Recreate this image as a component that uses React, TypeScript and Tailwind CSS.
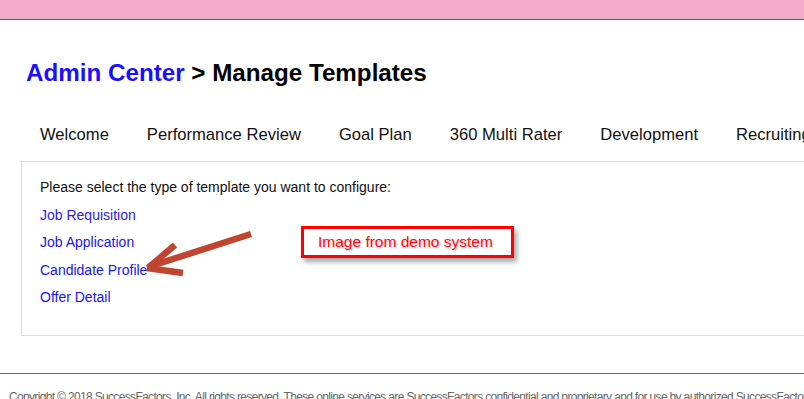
const tabs = ['Welcome', 'Performance Review', 'Goal Plan', '360 Multi Rater', 'Development', 'Recruiting'];

const templates = ['Job Requisition', 'Job Application', 'Candidate Profile', 'Offer Detail'];

function Arrow() {
  return (
    <svg className="absolute left-[140px] top-[225px]" width="120" height="60" viewBox="0 0 120 60">
      <g stroke="#c0452f" strokeWidth="6.5" strokeLinecap="butt" fill="none">
        <line x1="111" y1="9" x2="8" y2="42" />
        <line x1="35" y1="20" x2="8" y2="43" />
        <line x1="43" y1="48" x2="7" y2="43" />
      </g>
    </svg>
  );
}

export default function App() {
  return (
    <div className="relative h-[399px] w-[804px] overflow-hidden bg-white font-['Liberation_Sans',Arial,sans-serif]">
      <div className="h-[20px] border-b border-[#0b76d1] bg-[#f2aec8]" />

      <h1 className="ml-[26px] mt-[39px] text-[24.2px] font-bold leading-[28px] text-black">
        <span className="text-[#1c0fff]">Admin Center</span> &gt; Manage Templates
      </h1>

      <nav className="ml-[21px] mt-[38px] flex whitespace-nowrap">
        {tabs.map((t) => (
          <div key={t} className="px-[19px] pb-[16px] text-[16.6px] leading-[20px] text-[#111]">
            {t}
          </div>
        ))}
      </nav>

      <section className="ml-[21px] h-[175px] w-[820px] border border-[#dcdcdc] pl-[18px] pt-[15px]">
        <p className="text-[14px] leading-[20px] text-[#111]">Please select the type of template you want to configure:</p>
        <ul className="mt-[5px]">
          {templates.map((t, i) => (
            <li key={t} className={`text-[14px] leading-[27.3px] ${i === 0 ? 'text-[#3219e0]' : 'text-[#1a14f0]'}`}>
              {t}
            </li>
          ))}
        </ul>
      </section>

      <footer className="mt-[37px] border-t border-[#0a78d2] pl-[9px] pt-[16px]">
        <p className="whitespace-nowrap text-[12px] leading-[14px] tracking-[-0.66px] text-[#666]">
          Copyright © 2018 SuccessFactors, Inc. All rights reserved. These online services are SuccessFactors confidential and proprietary and for use by authorized SuccessFactors customers only.
        </p>
      </footer>

      <div className="absolute left-[301px] top-[226px] flex h-[32px] w-[213px] items-center border-[3px] border-[#ff0000] bg-white pl-[14px] shadow-[3px_4px_5px_rgba(0,0,0,0.35)]">
        <span className="text-[15.5px] leading-none text-[#ff0a14] [text-shadow:1px_1px_2px_rgba(0,0,0,0.25)]">Image from demo system</span>
      </div>
      <Arrow />
    </div>
  );
}
